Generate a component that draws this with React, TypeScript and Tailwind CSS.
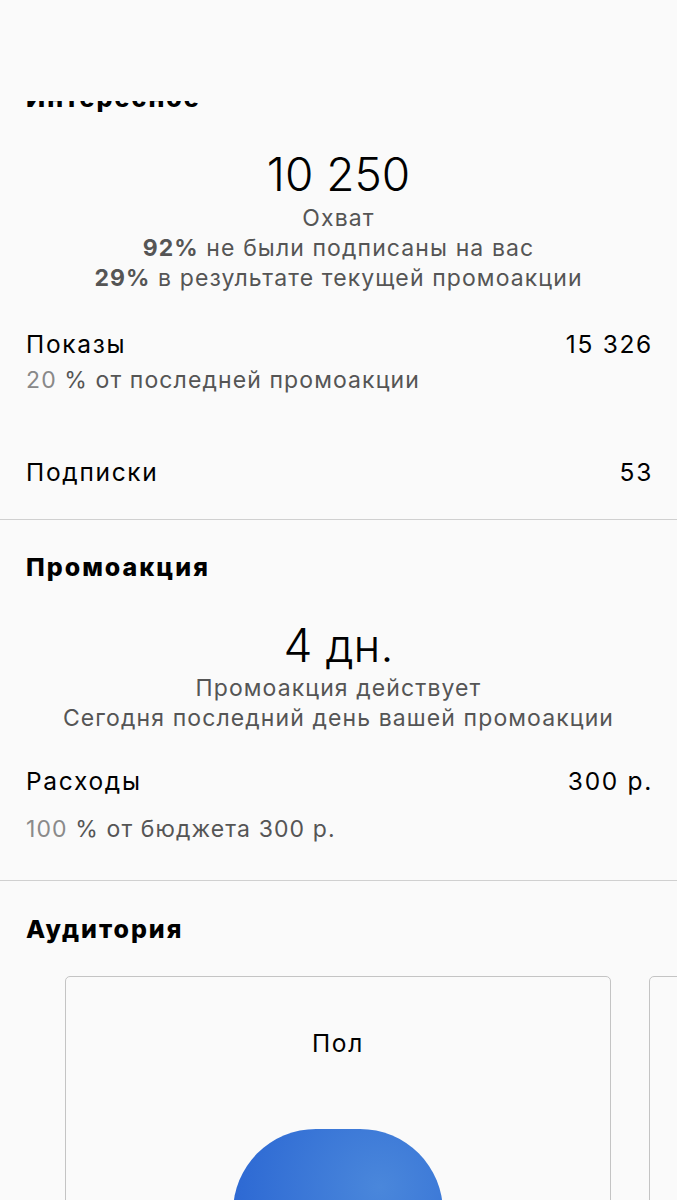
import React from "react";

const stats = [
  { pct: "92%", text: "не были подписаны на вас" },
  { pct: "29%", text: "в результате текущей промоакции" },
];

function Row({ label, value }: { label: string; value: string }) {
  return (
    <div className="flex h-[36px] items-center justify-between text-[24.5px] tracking-[1.7px] text-black">
      <span>{label}</span>
      <span className="-mr-[2px]">{value}</span>
    </div>
  );
}

export default function PromoInsights() {
  return (
    <div className="min-h-screen overflow-hidden bg-[#fafafa] font-['Inter',sans-serif]">
      <div className="h-[101px]" />

      <div className="overflow-hidden">
        <section className="px-[26px]">
          <h2 className="-mt-[18px] h-[30px] text-[25px] leading-[30px] font-extrabold tracking-[2px] text-black">Интересное</h2>

          <div className="mt-[33px] text-center">
            <div className="h-[56px] text-[46px] leading-[56px] font-light text-black">10 250</div>
            <div className="mt-[1px] text-[23px] leading-[30px] tracking-[1.1px] text-[#555]">
              <div>Охват</div>
              {stats.map((s) => (
                <div key={s.pct}>
                  <span className="font-bold">{s.pct}</span> {s.text}
                </div>
              ))}
            </div>
          </div>

          <div className="mt-[33px]">
            <Row label="Показы" value="15 326" />
            <div className="mt-[3px] h-[30px] text-[23px] leading-[30px] tracking-[1.1px] text-[#555]">
              <span className="text-[#888]">20</span> % от последней промоакции
            </div>
          </div>

          <div className="mt-[59px]">
            <Row label="Подписки" value="53" />
          </div>
        </section>

        <div className="mt-[29px] h-px bg-[#d0d0d0]" />

        <section className="px-[26px]">
          <h2 className="mt-[29px] h-[36px] text-[25px] leading-[36px] font-extrabold tracking-[2px] text-black">Промоакция</h2>

          <div className="mt-[32px] text-center">
            <div className="h-[56px] text-[46px] leading-[56px] font-light text-black">4 дн.</div>
            <div className="text-[23px] leading-[30px] tracking-[1.1px] text-[#555]">
              <div>Промоакция действует</div>
              <div>Сегодня последний день вашей промоакции</div>
            </div>
          </div>

          <div className="mt-[30px]">
            <Row label="Расходы" value="300 р." />
            <div className="mt-[15px] h-[30px] text-[23px] leading-[30px] tracking-[1.1px] text-[#555]">
              <span className="text-[#8a8a8a]">100</span> % от бюджета 300 р.
            </div>
          </div>
        </section>

        <div className="mt-[36px] h-px bg-[#d0d0d0]" />

        <section>
          <h2 className="mt-[30px] h-[36px] px-[26px] text-[25px] leading-[36px] font-extrabold tracking-[2px] text-black">Аудитория</h2>

          <div className="mt-[29px] flex gap-[38px] pl-[65px]">
            <div className="flex h-[320px] w-[546px] shrink-0 flex-col items-center rounded-[5px] border-[1.5px] border-[#c4c4c4] pt-[51px]">
              <div className="h-[30px] text-[24.5px] leading-[30px] tracking-[1.7px] text-black">Пол</div>
              <div className="mt-[71px] h-[210px] w-[210px] rounded-full bg-[radial-gradient(circle_at_70%_35%,#4a87db,#2f6bd4_75%,#2962ce)]" />
            </div>
            <div className="h-[320px] w-[546px] shrink-0 rounded-[5px] border-[1.5px] border-[#c4c4c4]" />
          </div>
        </section>
      </div>
    </div>
  );
}
